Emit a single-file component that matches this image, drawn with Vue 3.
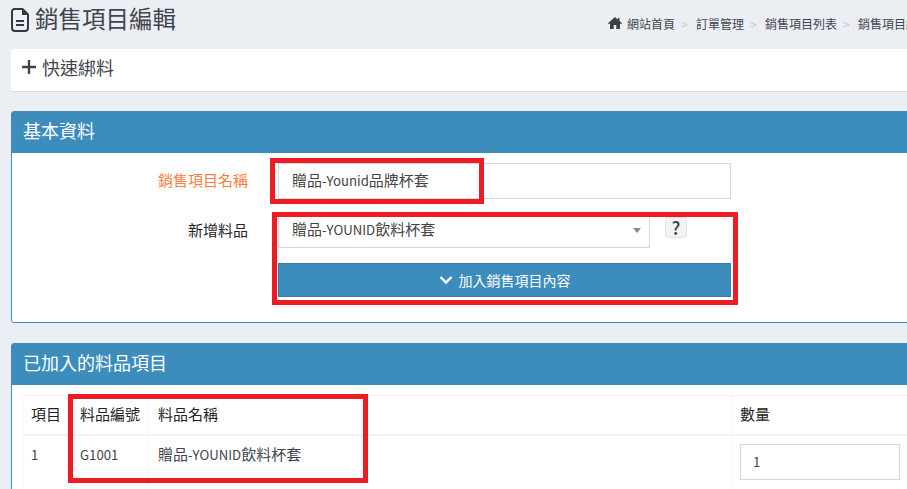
<template>
  <div class="page">
    <header class="top">
      <h1 class="title">
        <svg class="doc" viewBox="0 0 18 24" width="18" height="24">
          <path d="M3.500 1h8L17 6.500V20a3 3 0 0 1-3 3H4a3 3 0 0 1-3-3V3.500A2.500 2.500 0 0 1 3.500 1z" fill="none" stroke="#33373f" stroke-width="2"/>
          <path d="M11 1.500V7h5.500z" fill="#33373f"/>
          <path d="M5 13h8M5 17h8" stroke="#33373f" stroke-width="2"/>
        </svg>
        <span class="title-text">銷售項目編輯</span>
      </h1>
      <nav class="crumbs">
        <svg class="home" viewBox="0 0 14 12" width="14" height="12">
          <path d="M7 0L0 6.300l.8.900L2 6.200V12h3.700V8h2.600v4H12V6.200l1.200 1 .8-.9L11.500 4V1H10v1.700z" fill="#3f3f3f"/>
        </svg>
        <template v-for="(c, i) in crumbs" :key="c">
          <span class="sep" v-if="i > 0">&gt;</span>
          <span>{{ c }}</span>
        </template>
      </nav>
    </header>

    <section class="box quick">
      <svg viewBox="0 0 14 14" width="14" height="14"><path d="M7 0v14M0 7h14" stroke="#3f444e" stroke-width="2.400"/></svg>
      <span>快速綁料</span>
    </section>

    <section class="box panel basic">
      <h2 class="heading">基本資料</h2>
      <div class="form">
        <div class="row first">
          <label class="lbl orange">銷售項目名稱</label>
          <div class="field wide">贈品<span class="lat">-Younid</span>品牌杯套</div>
        </div>
        <div class="row second">
          <label class="lbl">新增料品</label>
          <div class="field select">
            <span>贈品<span class="lat">-YOUNID</span>飲料杯套</span>
            <i class="caret"></i>
          </div>
          <button class="help">?</button>
        </div>
        <button class="add">
          <svg viewBox="0 0 14 10" width="14" height="10"><path d="M1.500 2l5.500 5.500L12.500 2" fill="none" stroke="#fff" stroke-width="2.400"/></svg>
          <span>加入銷售項目內容</span>
        </button>
      </div>
    </section>

    <section class="box panel items">
      <h2 class="heading">已加入的料品項目</h2>
      <div class="tablewrap">
        <table>
          <thead>
            <tr><th class="c1">項目</th><th class="c2">料品編號</th><th class="c3">料品名稱</th><th class="c4">數量</th></tr>
          </thead>
          <tbody>
            <tr>
              <td><span class="lat">1</span></td><td><span class="lat">G1001</span></td><td class="c3">贈品<span class="lat">-YOUNID</span>飲料杯套</td>
              <td><div class="field qty"><span class="lat">1</span></div></td>
            </tr>
          </tbody>
        </table>
      </div>
    </section>

    <div class="mark m1"></div>
    <div class="mark m2"></div>
    <div class="mark m3"></div>
  </div>
</template>

<script setup>
const crumbs = ['網站首頁', '訂單管理', '銷售項目列表', '銷售項目編輯']
</script>

<style>
html, body { margin: 0; overflow: hidden; background: #ebeef3; }
</style>

<style scoped>
.page {
  position: relative;
  width: 907px;
  height: 489px;
  overflow: hidden;
  padding-left: 11px;
  box-sizing: border-box;
  background: #ebeef3;
  color: #3f444e;
  font-family: "Noto Sans CJK TC", sans-serif;
  font-size: 15px;
}
.lat { font-size: 13.200px; }
.top { display: flex; width: 1000px; height: 49px; }
.title {
  display: flex;
  align-items: flex-start;
  gap: 6px;
  width: 168px;
  flex: none;
  margin: 0;
  padding-top: 8px;
  font-size: 23.500px;
  font-weight: 400;
  line-height: 24px;
  color: #3f444e;
  white-space: nowrap;
}
.title-text { margin-top: -2px; }
.doc { flex: none; }
.crumbs {
  display: flex;
  align-items: center;
  gap: 5px;
  height: 14px;
  margin: 16px 0 0 429px;
  font-size: 12px;
  white-space: nowrap;
}
.sep { color: #c8cbd0; margin: 0 3.300px 0 1px; }
.box {
  width: 1000px;
  box-sizing: border-box;
  background: #fff;
  border-radius: 3px;
}
.quick {
  display: flex;
  align-items: center;
  gap: 6px;
  height: 43px;
  padding: 0 0 7px 11px;
  font-size: 18px;
  border-bottom: 1px solid #d9dce1;
}
.panel { border: 1px solid #3c8dbc; }
.basic { margin-top: 19px; height: 212px; }
.items { margin-top: 20px; height: 200px; }
.heading {
  margin: 0;
  height: 41px;
  padding-left: 11px;
  background: #3c8dbc;
  color: #fff;
  font-size: 18px;
  font-weight: 400;
  line-height: 36px;
}
.form { padding: 10px 0 0 266px; position: relative; }
.row { display: flex; align-items: flex-start; }
.second { margin-top: 13px; height: 51px; }
.lbl {
  position: absolute;
  left: 0;
  width: 236px;
  text-align: right;
  font-size: 15px;
  font-weight: 400;
  line-height: 34px;
  color: #222;
}
.second .lbl { margin-top: 1px; }
.orange { color: #f97d3c; }
.field {
  box-sizing: border-box;
  height: 36px;
  border: 1px solid #d2d6de;
  background: #fff;
  padding: 0 13px;
  line-height: 32px;
  font-size: 15px;
  color: #444;
}
.wide { width: 453px; }
.select { position: relative; width: 372px; }
.caret {
  position: absolute;
  right: 8px;
  top: 15px;
  border: 4px solid transparent;
  border-top: 5px solid #888;
  border-bottom: 0;
}
.help {
  width: 22px;
  height: 21px;
  margin: 5px 0 0 15px;
  padding: 0;
  border: 1px solid #e2e2e2;
  border-radius: 3px;
  background: #f4f4f4;
  color: #3a3f4a;
  font: 500 18px/17px "Noto Sans CJK TC", sans-serif;
}
.add {
  display: flex;
  align-items: center;
  justify-content: center;
  gap: 6px;
  width: 453px;
  height: 34px;
  padding: 0;
  border: 1px solid #367fa9;
  background: #3c8dbc;
  color: #fff;
  font: 400 14px "Noto Sans CJK TC", sans-serif;
}
.tablewrap { padding: 10px 0 0 10px; }
table {
  width: 1000px;
  border-collapse: collapse;
  table-layout: fixed;
}
th, td {
  border: 1px solid #f4f4f4;
  padding: 0 8px;
  text-align: left;
  font-size: 15px;
  color: #3f444e;
  white-space: nowrap;
}
th { height: 35px; padding-bottom: 3px; font-weight: 400; color: #222; border-bottom-width: 2px; }
td { height: 60px; vertical-align: top; line-height: 36px; }
.c1 { width: 32px; }
.c2 { width: 59px; }
th.c3 { width: 565px; }
th.c3, td.c3 { padding-left: 10px; }
.c4 { width: 300px; }
.qty { width: 160px; margin-top: 8px; padding: 0 12px; }
.mark {
  position: absolute;
  box-sizing: border-box;
  border: 5px solid #ed1c24;
  pointer-events: none;
}
.m1 { left: 270px; top: 158px; width: 214px; height: 46px; }
.m2 { left: 272px; top: 212px; width: 466px; height: 93px; }
.m3 { left: 68px; top: 394px; width: 300px; height: 89px; }
</style>
